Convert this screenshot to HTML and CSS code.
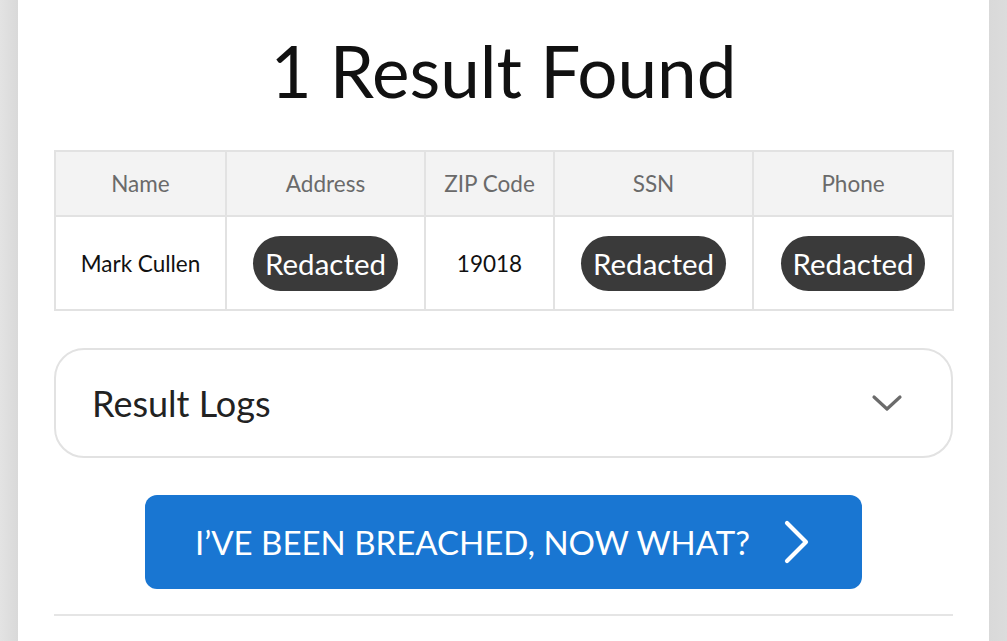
FILE: index.html
```html
<!DOCTYPE html>
<html lang="en">
<head>
<meta charset="utf-8">
<title>1 Result Found</title>
<link rel="stylesheet" href="styles.css">
</head>
<body>
<main class="panel">
  <h1 class="title">1 Result Found</h1>
  <table class="results">
    <colgroup>
      <col class="c-name"><col class="c-addr"><col class="c-zip"><col class="c-ssn"><col class="c-phone">
    </colgroup>
    <thead>
      <tr><th>Name</th><th>Address</th><th>ZIP Code</th><th>SSN</th><th>Phone</th></tr>
    </thead>
    <tbody>
      <tr>
        <td>Mark Cullen</td>
        <td><span class="pill">Redacted</span></td>
        <td>19018</td>
        <td><span class="pill">Redacted</span></td>
        <td><span class="pill">Redacted</span></td>
      </tr>
    </tbody>
  </table>
  <div class="logs">
    <span class="logs-title">Result Logs</span>
    <svg class="logs-chevron" width="32" height="18" viewBox="0 0 32 18"><path d="M3 3 L16 15 L29 3" fill="none" stroke="#6b6b6b" stroke-width="3.2" stroke-linecap="round" stroke-linejoin="round"/></svg>
  </div>
  <div class="cta-wrap">
    <a class="cta" href="#">
      <span class="cta-text">I’ve been breached, now what?</span>
      <svg class="cta-chevron" width="30" height="46" viewBox="0 0 30 46"><path d="M5 4 L24 23 L5 42" fill="none" stroke="#fff" stroke-width="4.2" stroke-linecap="round" stroke-linejoin="round"/></svg>
    </a>
  </div>
  <hr class="divider">
</main>
</body>
</html>
```

FILE: styles.css
```css
html, body {
  margin: 0;
  padding: 0;
}
body {
  background: linear-gradient(to right, #e3e3e3 0, #d9d9d9 18px, #d9d9d9 calc(100% - 18px), #dcdcdc 100%);
  font-family: Lato, "Open Sans", sans-serif;
  min-height: 641px;
}
.panel {
  margin: 0 18px;
  background: #fff;
  min-height: 641px;
  padding: 28px 36px 0;
  box-sizing: border-box;
  overflow: hidden;
}
.title {
  margin: 0;
  font-size: 71px;
  font-weight: 400;
  line-height: 86px;
  text-align: center;
  color: #111;
}
.results {
  margin-top: 36px;
  width: 100%;
  border-collapse: collapse;
  table-layout: fixed;
}
.c-name { width: 171px; }
.c-addr { width: 199px; }
.c-zip { width: 129px; }
.c-ssn { width: 199px; }
.c-phone { width: 200px; }
.results th,
.results td {
  border: 2px solid #e2e2e2;
  text-align: center;
  padding: 0;
}
.results th {
  background: #f3f3f3;
  color: #6a6a6a;
  font-weight: 400;
  font-size: 22.5px;
  height: 63px;
}
.results td {
  color: #111;
  font-size: 22.5px;
  height: 92px;
}
.pill {
  display: inline-block;
  background: #3a3a3a;
  color: #fff;
  font-size: 29.5px;
  line-height: 55px;
  padding: 0 12px;
  border-radius: 28px;
  vertical-align: middle;
}
.logs {
  margin-top: 37px;
  height: 110px;
  box-sizing: border-box;
  border: 2px solid #e2e2e2;
  border-radius: 30px;
  display: flex;
  align-items: center;
  justify-content: space-between;
  padding: 0 48px 0 36px;
}
.logs-title {
  font-size: 36px;
  color: #222;
}
.logs-chevron {
  display: block;
}
.cta-wrap {
  margin-top: 37px;
  display: flex;
  justify-content: center;
}
.cta {
  width: 717px;
  height: 94px;
  box-sizing: border-box;
  background: #1976d2;
  border-radius: 12px;
  display: flex;
  align-items: center;
  justify-content: center;
  gap: 32px;
  text-decoration: none;
  color: #fff;
}
.cta-text {
  text-transform: uppercase;
  font-size: 33px;
}
.cta-chevron {
  display: block;
}
.divider {
  margin: 25px 0 0;
  border: 0;
  height: 2px;
  background: #e5e5e5;
}
```
